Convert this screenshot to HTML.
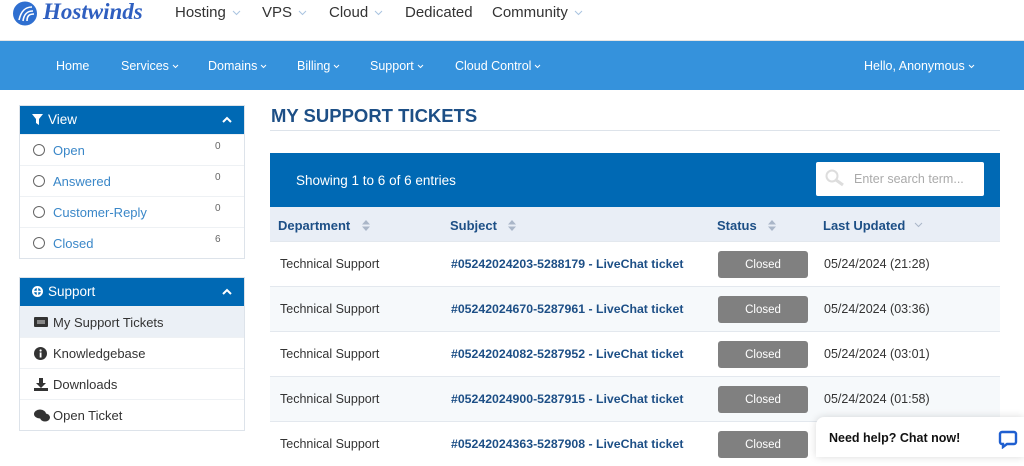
<!DOCTYPE html><html><head><style>
*{box-sizing:border-box;margin:0;padding:0}
body{width:1024px;height:451px;overflow:hidden;background:#fff;font-family:"Liberation Sans",sans-serif;position:relative}
.a{position:absolute}
.top{height:41px;border-bottom:1px solid #e5e5e5}
.tn{font-size:15px;color:#333;top:4px}
.tn svg{margin-left:6px;vertical-align:middle}
.nav{top:41px;left:0;width:1024px;height:49px;background:#3592dc;color:#fff;font-size:12.5px}
.nav span{position:absolute;top:18px}
.nav svg{margin-left:3px;vertical-align:middle}
.panel{left:19px;width:226px;border:1px solid #dde3ea}
.ph{height:28px;background:#0069b4;color:#fff;font-size:13.5px;padding:6px 0 0 12px;position:relative}
.ph svg.c{position:absolute;right:12px;top:10px}
.row{height:31px;border-top:1px solid #eef1f4;font-size:13px;position:relative;padding:8px 0 0 33px}
.rad{position:absolute;left:13px;top:9px;width:12px;height:12px;border:1.5px solid #666;border-radius:50%}
.cnt{position:absolute;left:195px;top:6px;font-size:10px;color:#666}
.blue{color:#3a87c8}
.ic{position:absolute;left:14px;top:9px}
h1{position:absolute;left:271px;top:105px;font-size:18.5px;color:#1d4f86;font-weight:bold}
.tb{left:270px;top:153px;width:730px}
.th{height:54px;background:#0069b4;position:relative}
.ch{height:34px;background:#e9eef6;position:relative;font-size:13px;font-weight:bold;color:#1d4f86}
.tr{height:45px;border-top:1px solid #e3e8ee;position:relative;font-size:12.5px;color:#333}
.tr span{position:absolute;top:15px}
.st{position:absolute;left:448px;top:9px;width:90px;height:27px;background:#808080;border-radius:3px;color:#fff;font-size:11.5px;text-align:center;line-height:28px}
.lk{color:#1d4f86;font-weight:bold;font-size:12.3px}
</style></head><body>
<div class="a top" style="left:0;top:0;width:1024px"></div>
<svg class="a" style="left:12px;top:1px" width="28" height="25"><circle cx="13" cy="12.5" r="12" fill="#2f6fd0"/><path d="M7 19C9 10 13 6 20 6M11 20C12 13 15 10 21 10M15 20C15 15 17 13 22 13" stroke="#fff" stroke-width="1.6" fill="none"/></svg>
<div class="a" style="left:43px;top:-1px;font-size:23px;font-style:italic;font-weight:bold;color:#2f5fc0;font-family:'Liberation Serif',serif">Hostwinds</div>
<div class="a tn" style="left:175px">Hosting<svg width="9" height="6"><path d="M1 1l3.5 3.5L8 1" stroke="#aac4e0" fill="none"/></svg></div>
<div class="a tn" style="left:262px">VPS<svg width="9" height="6"><path d="M1 1l3.5 3.5L8 1" stroke="#aac4e0" fill="none"/></svg></div>
<div class="a tn" style="left:329px">Cloud<svg width="9" height="6"><path d="M1 1l3.5 3.5L8 1" stroke="#aac4e0" fill="none"/></svg></div>
<div class="a tn" style="left:405px">Dedicated</div>
<div class="a tn" style="left:492px">Community<svg width="9" height="6"><path d="M1 1l3.5 3.5L8 1" stroke="#aac4e0" fill="none"/></svg></div>
<div class="a nav"><span style="left:56px">Home</span>
<span style="left:121px">Services<svg width="7" height="5"><path d="M1 1l2.5 2.5L6 1" stroke="#fff" fill="none"/></svg></span>
<span style="left:208px">Domains<svg width="7" height="5"><path d="M1 1l2.5 2.5L6 1" stroke="#fff" fill="none"/></svg></span>
<span style="left:297px">Billing<svg width="7" height="5"><path d="M1 1l2.5 2.5L6 1" stroke="#fff" fill="none"/></svg></span>
<span style="left:370px">Support<svg width="7" height="5"><path d="M1 1l2.5 2.5L6 1" stroke="#fff" fill="none"/></svg></span>
<span style="left:455px">Cloud Control<svg width="7" height="5"><path d="M1 1l2.5 2.5L6 1" stroke="#fff" fill="none"/></svg></span>
<span style="left:864px">Hello, Anonymous<svg width="7" height="5"><path d="M1 1l2.5 2.5L6 1" stroke="#fff" fill="none"/></svg></span></div>
<div class="a panel" style="top:105px"><div class="ph"><svg width="11" height="11" style="vertical-align:-1px;margin-right:5px"><path d="M0 0h11L7 5v6L4 9V5z" fill="#fff"/></svg>View<svg class="c" width="10" height="7"><path d="M1 6l4-4 4 4" stroke="#fff" stroke-width="2" fill="none"/></svg></div>
<div class="row blue"><div class="rad"></div>Open<span class="cnt">0</span></div>
<div class="row blue"><div class="rad"></div>Answered<span class="cnt">0</span></div>
<div class="row blue"><div class="rad"></div>Customer-Reply<span class="cnt">0</span></div>
<div class="row blue"><div class="rad"></div>Closed<span class="cnt">6</span></div></div>
<div class="a panel" style="top:277px"><div class="ph"><svg width="11" height="11" style="vertical-align:-1px;margin-right:5px"><circle cx="5.5" cy="5.5" r="4.5" fill="none" stroke="#fff" stroke-width="2"/><path d="M5.5 1v9M1 5.5h9" stroke="#fff" stroke-width="1.5"/></svg>Support<svg class="c" width="10" height="7"><path d="M1 6l4-4 4 4" stroke="#fff" stroke-width="2" fill="none"/></svg></div>
<div class="row" style="background:#ebf0f6;color:#333"><svg class="ic" width="14" height="11" style="top:10px"><rect x="0" y="0" width="14" height="10" rx="1" fill="#333"/><rect x="3" y="3" width="8" height="4" fill="#888"/></svg>My Support Tickets</div>
<div class="row" style="color:#333"><svg class="ic" width="13" height="13"><circle cx="6.5" cy="6.5" r="6.5" fill="#333"/><rect x="5.7" y="5.5" width="1.8" height="5" fill="#fff"/><circle cx="6.6" cy="3.5" r="1.1" fill="#fff"/></svg>Knowledgebase</div>
<div class="row" style="color:#333"><svg class="ic" width="14" height="13"><path d="M5 0h4v5h3L7 10 2 5h3z" fill="#333"/><rect x="0" y="10" width="14" height="3" fill="#333"/></svg>Downloads</div>
<div class="row" style="color:#333"><svg class="ic" width="16" height="13"><ellipse cx="6" cy="5" rx="6" ry="4.5" fill="#333"/><ellipse cx="11" cy="8.5" rx="5" ry="4" fill="#333"/></svg>Open Ticket</div></div>
<h1>MY SUPPORT TICKETS</h1>
<div class="a" style="left:270px;top:130px;width:730px;height:1px;background:#dde3ea"></div>
<div class="a tb"><div class="th"><span class="a" style="left:26px;top:20px;color:#fff;font-size:13.5px">Showing 1 to 6 of 6 entries</span>
<div class="a" style="left:546px;top:9px;width:168px;height:34px;background:#fff;border-radius:2px;color:#aaa;font-size:12.5px;padding:10px 0 0 38px">Enter search term...<svg class="a" style="left:9px;top:7px" width="20" height="18"><circle cx="7" cy="7" r="5.5" fill="none" stroke="#ddd" stroke-width="2"/><path d="M11 11l7 5" stroke="#ddd" stroke-width="3"/></svg></div></div>
<div class="ch"><span class="a" style="left:8px;top:11px">Department</span><span class="a" style="left:180px;top:11px">Subject</span><span class="a" style="left:447px;top:11px">Status</span><span class="a" style="left:553px;top:11px">Last Updated</span>
<svg class="a" style="left:92px;top:13px" width="8" height="11"><path d="M0 4.5L4 0 8 4.5zM0 6.5L4 11 8 6.5z" fill="#aab6c8"/></svg>
<svg class="a" style="left:238px;top:13px" width="8" height="11"><path d="M0 4.5L4 0 8 4.5zM0 6.5L4 11 8 6.5z" fill="#aab6c8"/></svg>
<svg class="a" style="left:498px;top:13px" width="8" height="11"><path d="M0 4.5L4 0 8 4.5zM0 6.5L4 11 8 6.5z" fill="#aab6c8"/></svg>
<svg class="a" style="left:644px;top:15px" width="9" height="6"><path d="M1 1l3.5 3.5L8 1" stroke="#aab6c8" fill="none"/></svg></div>
<div>
<div class="tr" style="background:#fff"><span style="left:10px">Technical Support</span><span class="lk" style="left:181px">#05242024203-5288179 - LiveChat ticket</span><div class="st">Closed</div><span style="left:554px">05/24/2024 (21:28)</span></div>
<div class="tr" style="background:#f6f9fb"><span style="left:10px">Technical Support</span><span class="lk" style="left:181px">#05242024670-5287961 - LiveChat ticket</span><div class="st">Closed</div><span style="left:554px">05/24/2024 (03:36)</span></div>
<div class="tr" style="background:#fff"><span style="left:10px">Technical Support</span><span class="lk" style="left:181px">#05242024082-5287952 - LiveChat ticket</span><div class="st">Closed</div><span style="left:554px">05/24/2024 (03:01)</span></div>
<div class="tr" style="background:#f6f9fb"><span style="left:10px">Technical Support</span><span class="lk" style="left:181px">#05242024900-5287915 - LiveChat ticket</span><div class="st">Closed</div><span style="left:554px">05/24/2024 (01:58)</span></div>
<div class="tr" style="background:#fff"><span style="left:10px">Technical Support</span><span class="lk" style="left:181px">#05242024363-5287908 - LiveChat ticket</span><div class="st">Closed</div></div>
</div></div>
<div class="a" style="left:816px;top:417px;width:208px;height:40px;background:#fff;border-radius:8px 0 0 0;box-shadow:0 0 8px rgba(0,0,0,.15);font-size:12.5px;font-weight:bold;color:#111;padding:14px 0 0 13px">Need help? Chat now!
<svg class="a" style="left:182px;top:12px" width="20" height="20"><path d="M4 3h12a2 2 0 0 1 2 2v8a2 2 0 0 1-2 2H9l-4 3v-3H4a2 2 0 0 1-2-2V5a2 2 0 0 1 2-2z" fill="none" stroke="#1f5fd0" stroke-width="2.4"/></svg></div>
</body></html>
